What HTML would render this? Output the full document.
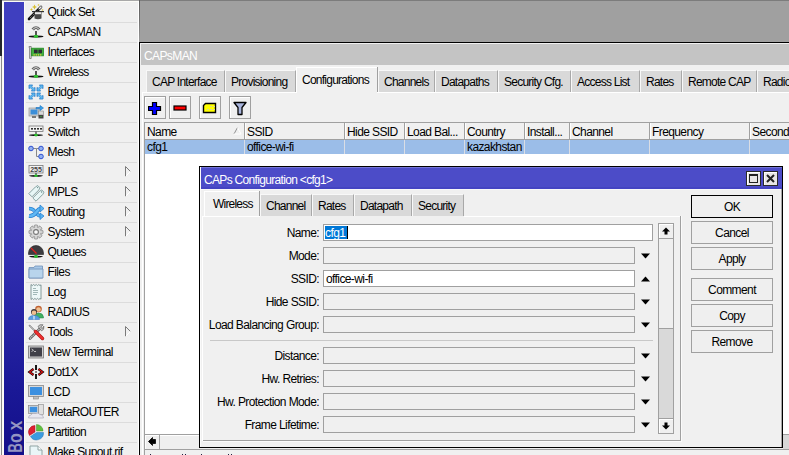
<!DOCTYPE html>
<html><head><meta charset="utf-8"><style>
html,body{margin:0;padding:0}
body{width:789px;height:455px;overflow:hidden;position:relative;background:#a0a0a0;font-family:"Liberation Sans",sans-serif;font-size:12px}
body>div,body>svg{position:absolute}
.t{white-space:nowrap;letter-spacing:-0.6px;line-height:14px;color:#000}
</style></head><body>
<div style="left:0px;top:0px;width:789px;height:1px;background:#a8a8a8"></div>
<div style="left:140px;top:0px;width:649px;height:1px;background:#7c7c7c"></div>
<div style="left:0px;top:0px;width:2px;height:56px;background:#24282c"></div>
<div style="left:0px;top:56px;width:1px;height:399px;background:#f4f4f4"></div>
<div style="left:1px;top:56px;width:1px;height:399px;background:#8a8a8a"></div>
<div style="left:2px;top:1px;width:2px;height:454px;background:#fbfbf6"></div>
<div style="left:2px;top:1px;width:137px;height:1px;background:#fbfbf6"></div>
<div style="left:4px;top:2px;width:20px;height:453px;background:linear-gradient(#3f3fbf 0px,#3f3fbf 150px,#3836b8 208px,#2826a6 304px,#1a1896 388px,#130f8a 455px)"></div>
<div style="left:24px;top:2px;width:1px;height:453px;background:#fbfbf6"></div>
<div style="left:25px;top:2px;width:113px;height:453px;background:#f0f0f0"></div>
<div style="left:138px;top:1px;width:1px;height:454px;background:#ffffff"></div>
<svg style="left:4px;top:418px" width="20" height="37"><g font-family="Liberation Sans" font-size="20.5" font-weight="bold"><g transform="translate(19.0,37) rotate(-90)" fill="#121070"><text x="2.4" y="0" textLength="9.3" lengthAdjust="spacingAndGlyphs">B</text><text x="12" y="0" textLength="9.8" lengthAdjust="spacingAndGlyphs">o</text><text x="24.7" y="0" textLength="9.6" lengthAdjust="spacingAndGlyphs">x</text></g><g transform="translate(18.0,37) rotate(-90)" fill="#9494c4"><text x="2.4" y="0" textLength="9.3" lengthAdjust="spacingAndGlyphs">B</text><text x="12" y="0" textLength="9.8" lengthAdjust="spacingAndGlyphs">o</text><text x="24.7" y="0" textLength="9.6" lengthAdjust="spacingAndGlyphs">x</text></g></g></svg>
<div class="t" style="left:47.5px;top:5px;">Quick Set</div>
<svg style="left:28px;top:4px;overflow:visible" width="16" height="16" viewBox="0 0 16 16">
<path d="M1 15 L13 3" stroke="#111" stroke-width="2.6" stroke-linecap="round"/>
<path d="M2 14 L12 4" stroke="#bbb" stroke-width="0.8" stroke-dasharray="1 1.2"/>
<path d="M11 5 L13.5 2.5" stroke="#eee" stroke-width="1.6"/>
<path d="M6.5 0.5 L7.3 2.2 L9 3 L7.3 3.8 L6.5 5.5 L5.7 3.8 L4 3 L5.7 2.2Z" fill="#d8c030"/>
<path d="M3.5 4 L4 5 L5 5.5 L4 6 L3.5 7 L3 6 L2 5.5 L3 5Z" fill="#d8c030"/>
<circle cx="10.5" cy="1" r="0.8" fill="#d8c030"/><circle cx="14.5" cy="6" r="0.8" fill="#d8c030"/>
<rect x="4" y="7" width="12" height="1.2" fill="#333"/>
<path d="M6.5 8 H13.5 V14.5 Q10 16 6.5 14.5Z" fill="#4a4a4a"/>
<rect x="7" y="8.2" width="6" height="2" fill="#e8e8e8"/>
</svg>
<div style="left:26px;top:22px;width:111px;height:1px;background:#dcdcdc"></div>
<div class="t" style="left:47.5px;top:25px;">CAPsMAN</div>
<svg style="left:28px;top:24px;overflow:visible" width="16" height="16" viewBox="0 0 16 16">
<path d="M4 5 Q8 0.5 12 5" stroke="#666" stroke-width="1.2" fill="none"/>
<path d="M5.5 6 Q8 3 10.5 6" stroke="#555" stroke-width="1.2" fill="none"/>
<rect x="7" y="7" width="2" height="5" fill="#555"/>
<ellipse cx="8" cy="12.5" rx="7.5" ry="1" fill="#111"/>
<ellipse cx="8" cy="12.3" rx="2.3" ry="1.6" fill="#2ec02e"/>
</svg>
<div style="left:26px;top:42px;width:111px;height:1px;background:#dcdcdc"></div>
<div class="t" style="left:47.5px;top:45px;">Interfaces</div>
<svg style="left:28px;top:44px;overflow:visible" width="16" height="16" viewBox="0 0 16 16">
<path d="M1 2.5 H3.2 V14.5 H1.6 V3.5 H1Z" fill="#e8e8e8" stroke="#808080" stroke-width="0.9"/>
<rect x="3.6" y="4.2" width="11.8" height="7.6" fill="#40b040" stroke="#208820" stroke-width="0.8"/>
<rect x="6" y="5.6" width="3.6" height="3.6" fill="#2c2c34"/><rect x="10.4" y="5.6" width="3.6" height="3.6" fill="#2c2c34"/>
<rect x="5.5" y="10.2" width="1.2" height="1.4" fill="#e8c840"/><rect x="7.7" y="10.2" width="1.2" height="1.4" fill="#e8c840"/><rect x="9.9" y="10.2" width="1.2" height="1.4" fill="#e8c840"/><rect x="12.1" y="10.2" width="1.2" height="1.4" fill="#e8c840"/>
</svg>
<div style="left:26px;top:62px;width:111px;height:1px;background:#dcdcdc"></div>
<div class="t" style="left:47.5px;top:65px;">Wireless</div>
<svg style="left:28px;top:64px;overflow:visible" width="16" height="16" viewBox="0 0 16 16">
<path d="M4 5 Q8 0.5 12 5" stroke="#666" stroke-width="1.2" fill="none"/>
<path d="M5.5 6 Q8 3 10.5 6" stroke="#555" stroke-width="1.2" fill="none"/>
<rect x="7" y="7" width="2" height="5" fill="#555"/>
<ellipse cx="8" cy="12.5" rx="7.5" ry="1" fill="#111"/>
<ellipse cx="8" cy="12.3" rx="2.3" ry="1.6" fill="#2ec02e"/>
</svg>
<div style="left:26px;top:82px;width:111px;height:1px;background:#dcdcdc"></div>
<div class="t" style="left:47.5px;top:85px;">Bridge</div>
<svg style="left:28px;top:84px;overflow:visible" width="16" height="16" viewBox="0 0 16 16">
<g transform="translate(1,1)"><path d="M0 0 H3.6 L2.6 1.2 L4.8 3.4 L6 2.4 V6 H2.4 L3.4 4.8 L1.2 2.6 L0 3.6Z" fill="#60bcf2" stroke="#2a7cc8" stroke-width="0.8" stroke-linejoin="round"/></g>
<g transform="translate(15,1) scale(-1,1)"><path d="M0 0 H3.6 L2.6 1.2 L4.8 3.4 L6 2.4 V6 H2.4 L3.4 4.8 L1.2 2.6 L0 3.6Z" fill="#60bcf2" stroke="#2a7cc8" stroke-width="0.8" stroke-linejoin="round"/></g>
<g transform="translate(1,15) scale(1,-1)"><path d="M0 0 H3.6 L2.6 1.2 L4.8 3.4 L6 2.4 V6 H2.4 L3.4 4.8 L1.2 2.6 L0 3.6Z" fill="#60bcf2" stroke="#2a7cc8" stroke-width="0.8" stroke-linejoin="round"/></g>
<g transform="translate(15,15) scale(-1,-1)"><path d="M0 0 H3.6 L2.6 1.2 L4.8 3.4 L6 2.4 V6 H2.4 L3.4 4.8 L1.2 2.6 L0 3.6Z" fill="#60bcf2" stroke="#2a7cc8" stroke-width="0.8" stroke-linejoin="round"/></g>
</svg>
<div style="left:26px;top:102px;width:111px;height:1px;background:#dcdcdc"></div>
<div class="t" style="left:47.5px;top:105px;">PPP</div>
<svg style="left:28px;top:104px;overflow:visible" width="16" height="16" viewBox="0 0 16 16">
<rect x="1" y="4" width="10" height="8" fill="#d0d0d0" stroke="#999" stroke-width="0.7"/>
<rect x="2.5" y="5.5" width="7" height="5" fill="#3c8ed8"/>
<rect x="4" y="12" width="4" height="2" fill="#777"/>
<rect x="10.5" y="7" width="5" height="4" fill="#d8d8d8" stroke="#888" stroke-width="0.6"/>
<rect x="10.5" y="11" width="5" height="3.5" fill="#444"/>
<rect x="12.5" y="12" width="1" height="1" fill="#3c3"/>
<path d="M8 3.5 H12 V1.5 L15.5 4 L12 6.5 V4.8 H8Z" fill="#3aa0e8" stroke="#1a70c0" stroke-width="0.6"/>
</svg>
<div style="left:26px;top:122px;width:111px;height:1px;background:#dcdcdc"></div>
<div class="t" style="left:47.5px;top:125px;">Switch</div>
<svg style="left:28px;top:124px;overflow:visible" width="16" height="16" viewBox="0 0 16 16">
<rect x="1" y="2" width="14" height="5.5" fill="#f4f4f4" stroke="#777" stroke-width="0.8"/>
<rect x="3" y="4" width="2" height="1.6" fill="#333"/><rect x="6" y="4" width="2" height="1.6" fill="#333"/>
<rect x="9" y="4" width="2" height="1.6" fill="#333"/><rect x="12" y="4" width="2" height="1.6" fill="#333"/>
<rect x="7.3" y="7.5" width="1.4" height="3" fill="#555"/>
<ellipse cx="8" cy="11.2" rx="7" ry="0.9" fill="#111"/>
<ellipse cx="8" cy="11.1" rx="1.8" ry="1.3" fill="#2ec02e"/>
</svg>
<div style="left:26px;top:142px;width:111px;height:1px;background:#dcdcdc"></div>
<div class="t" style="left:47.5px;top:145px;">Mesh</div>
<svg style="left:28px;top:144px;overflow:visible" width="16" height="16" viewBox="0 0 16 16">
<path d="M3 4.5 H8.5 V12.5 H13" stroke="#888" stroke-width="1" fill="none"/>
<path d="M8.5 4.5 H13" stroke="#888" stroke-width="1"/>
<circle cx="3" cy="4.5" r="2.3" fill="#90b0f0" stroke="#3050d0" stroke-width="1"/>
<circle cx="13" cy="4.5" r="2.3" fill="#90b0f0" stroke="#3050d0" stroke-width="1"/>
<circle cx="13" cy="12.5" r="2.3" fill="#90b0f0" stroke="#3050d0" stroke-width="1"/>
</svg>
<div style="left:26px;top:162px;width:111px;height:1px;background:#dcdcdc"></div>
<div class="t" style="left:47.5px;top:165px;">IP</div>
<svg style="left:28px;top:164px;overflow:visible" width="16" height="16" viewBox="0 0 16 16">
<rect x="1" y="1.5" width="14" height="7.5" fill="#f4f4f4" stroke="#777" stroke-width="0.8"/>
<text x="8" y="8" font-family="Liberation Sans" font-size="7" font-weight="bold" text-anchor="middle" fill="#444">255</text>
<rect x="7.3" y="9" width="1.4" height="2" fill="#555"/>
<ellipse cx="8" cy="11.8" rx="7" ry="0.9" fill="#111"/>
<ellipse cx="8" cy="11.7" rx="1.8" ry="1.3" fill="#2ec02e"/>
</svg>
<div style="left:26px;top:182px;width:111px;height:1px;background:#dcdcdc"></div>
<svg style="left:124px;top:166px" width="8" height="12"><path d="M1.5 0.5 L1.5 10.5" stroke="#7a7a7a" stroke-width="1"/><path d="M1.5 0.5 L6.5 5.5" stroke="#7a7a7a" stroke-width="1"/><path d="M1.5 10.5 L6.5 5.5" stroke="#ffffff" stroke-width="1"/></svg>
<div class="t" style="left:47.5px;top:185px;">MPLS</div>
<svg style="left:28px;top:184px;overflow:visible" width="16" height="16" viewBox="0 0 16 16">
<path d="M0.8 9.6 L7.6 2.8 L9.8 1.6 L12 3.8 L10.8 6 L4 12.8Z" fill="#e8f6f6" stroke="#7a9898" stroke-width="0.9" stroke-linejoin="round"/>
<path d="M4.8 14 L11.6 7.2 L13.8 6 L16 8.2 L14.8 10.4 L8 17.2Z" fill="#e8f6f6" stroke="#7a9898" stroke-width="0.9" stroke-linejoin="round"/>
<circle cx="9.6" cy="3.6" r="0.7" fill="#6a8888"/><circle cx="13.6" cy="8" r="0.7" fill="#6a8888"/>
</svg>
<div style="left:26px;top:202px;width:111px;height:1px;background:#dcdcdc"></div>
<svg style="left:124px;top:186px" width="8" height="12"><path d="M1.5 0.5 L1.5 10.5" stroke="#7a7a7a" stroke-width="1"/><path d="M1.5 0.5 L6.5 5.5" stroke="#7a7a7a" stroke-width="1"/><path d="M1.5 10.5 L6.5 5.5" stroke="#ffffff" stroke-width="1"/></svg>
<div class="t" style="left:47.5px;top:205px;">Routing</div>
<svg style="left:28px;top:204px;overflow:visible" width="16" height="16" viewBox="0 0 16 16">
<path d="M1 4.5 Q4.5 4.5 6.5 7" stroke="#2a80d0" stroke-width="3.6" fill="none"/>
<path d="M1 4.5 Q4.5 4.5 6.5 7" stroke="#58b4f4" stroke-width="2.2" fill="none"/>
<path d="M9 10 Q10.5 12 12.5 12" stroke="#2a80d0" stroke-width="3.6" fill="none"/>
<path d="M9 10 Q10.5 12 12.5 12" stroke="#58b4f4" stroke-width="2.2" fill="none"/>
<path d="M12 9 L16 12 L12 15.5Z" fill="#58b4f4" stroke="#2a80d0" stroke-width="0.8" stroke-linejoin="round"/>
<path d="M1 12 Q5 12.5 8 8.5 Q10.5 5 12.5 4.5" stroke="#2a80d0" stroke-width="4" fill="none"/>
<path d="M1 12 Q5 12.5 8 8.5 Q10.5 5 12.5 4.5" stroke="#60b8f4" stroke-width="2.6" fill="none"/>
<path d="M12 1 L16 4.5 L12 8Z" fill="#60b8f4" stroke="#2a80d0" stroke-width="0.8" stroke-linejoin="round"/>
</svg>
<div style="left:26px;top:222px;width:111px;height:1px;background:#dcdcdc"></div>
<svg style="left:124px;top:206px" width="8" height="12"><path d="M1.5 0.5 L1.5 10.5" stroke="#7a7a7a" stroke-width="1"/><path d="M1.5 0.5 L6.5 5.5" stroke="#7a7a7a" stroke-width="1"/><path d="M1.5 10.5 L6.5 5.5" stroke="#ffffff" stroke-width="1"/></svg>
<div class="t" style="left:47.5px;top:225px;">System</div>
<svg style="left:28px;top:224px;overflow:visible" width="16" height="16" viewBox="0 0 16 16">
<g transform="translate(8,8)">
<g fill="#d0d0d0" stroke="#888" stroke-width="0.8">
<rect x="-1.8" y="-7" width="3.6" height="14" rx="1"/>
<rect x="-1.8" y="-7" width="3.6" height="14" rx="1" transform="rotate(45)"/>
<rect x="-1.8" y="-7" width="3.6" height="14" rx="1" transform="rotate(90)"/>
<rect x="-1.8" y="-7" width="3.6" height="14" rx="1" transform="rotate(135)"/>
</g>
<circle r="4.6" fill="#d8d8d8"/>
<circle r="2.4" fill="#fafafa" stroke="#777" stroke-width="1.1"/>
</g>
</svg>
<div style="left:26px;top:242px;width:111px;height:1px;background:#dcdcdc"></div>
<svg style="left:124px;top:226px" width="8" height="12"><path d="M1.5 0.5 L1.5 10.5" stroke="#7a7a7a" stroke-width="1"/><path d="M1.5 0.5 L6.5 5.5" stroke="#7a7a7a" stroke-width="1"/><path d="M1.5 10.5 L6.5 5.5" stroke="#ffffff" stroke-width="1"/></svg>
<div class="t" style="left:47.5px;top:245px;">Queues</div>
<svg style="left:28px;top:244px;overflow:visible" width="16" height="16" viewBox="0 0 16 16">
<path d="M0.5 9 A7.5 7.5 0 0 1 15.5 9 V10.5 H0.5Z" fill="#3c3c40" stroke="#222" stroke-width="0.6"/>
<path d="M3 4 L8.5 9.5" stroke="#e02020" stroke-width="1.3"/>
<rect x="7.3" y="10.5" width="1.4" height="1.5" fill="#666"/>
<ellipse cx="8" cy="12.6" rx="7" ry="0.9" fill="#111"/>
<ellipse cx="8" cy="12.5" rx="2" ry="1.4" fill="#2ec02e"/>
</svg>
<div style="left:26px;top:262px;width:111px;height:1px;background:#dcdcdc"></div>
<div class="t" style="left:47.5px;top:265px;">Files</div>
<svg style="left:28px;top:264px;overflow:visible" width="16" height="16" viewBox="0 0 16 16">
<path d="M1 3.5 H6 L7 2 H14.5 V14 H1Z" fill="#a8c8e8" stroke="#7090b8" stroke-width="0.8"/>
<path d="M1 5 H15 V14 H1Z" fill="#b8d4ec" stroke="#7090b8" stroke-width="0.8"/>
</svg>
<div style="left:26px;top:282px;width:111px;height:1px;background:#dcdcdc"></div>
<div class="t" style="left:47.5px;top:285px;">Log</div>
<svg style="left:28px;top:284px;overflow:visible" width="16" height="16" viewBox="0 0 16 16">
<path d="M3 0.5 L4.3 1.6 L5.6 0.5 L6.9 1.6 L8.2 0.5 L9.5 1.6 L10.8 0.5 L12 1.6 L13 0.8 V15.2 L12 14.4 L10.8 15.5 L9.5 14.4 L8.2 15.5 L6.9 14.4 L5.6 15.5 L4.3 14.4 L3 15.5Z" fill="#eef8f8" stroke="#6a8484" stroke-width="0.8"/>
<path d="M5 4.5h3M5 6.5h5M5 8.5h5M5 10.5h4" stroke="#98b0b0" stroke-width="0.9"/>
</svg>
<div style="left:26px;top:302px;width:111px;height:1px;background:#dcdcdc"></div>
<div class="t" style="left:47.5px;top:305px;">RADIUS</div>
<svg style="left:28px;top:304px;overflow:visible" width="16" height="16" viewBox="0 0 16 16">
<circle cx="10.5" cy="5" r="3.3" fill="#c06030"/>
<path d="M6 14 Q6 9 10.5 9 Q15 9 15.5 13 V14Z" fill="#40b060" stroke="#208040" stroke-width="0.5"/>
<circle cx="10.5" cy="5.5" r="2.3" fill="#f0c090"/>
<circle cx="6" cy="8" r="3" fill="#403838"/>
<circle cx="6" cy="8.7" r="2.3" fill="#f0c090"/>
<path d="M0.5 15.5 Q0.5 11.5 6 11.5 Q11.5 11.5 11.5 15.5Z" fill="#5a9ee0" stroke="#3070c0" stroke-width="0.5"/>
<rect x="5.5" y="12" width="1" height="3.5" fill="#fff"/>
</svg>
<div style="left:26px;top:322px;width:111px;height:1px;background:#dcdcdc"></div>
<div class="t" style="left:47.5px;top:325px;">Tools</div>
<svg style="left:28px;top:324px;overflow:visible" width="16" height="16" viewBox="0 0 16 16">
<path d="M2 14.5 L11.5 5" stroke="#666" stroke-width="2.6" stroke-linecap="round"/>
<path d="M2 14.5 L11.5 5" stroke="#d0d0d0" stroke-width="1.2" stroke-dasharray="1.2 0.8"/>
<path d="M10 2.5 Q11.5 0 15 0.8 L12.8 3 L13.2 4 L14.5 4.3 L15.8 2.2 Q16.5 6 13.5 6.8 Z" fill="#c8c8c8" stroke="#6a6a6a" stroke-width="0.8" stroke-linejoin="round"/>
<path d="M1.5 1.5 L7 7" stroke="#777" stroke-width="1.6" stroke-linecap="round"/>
<path d="M1.5 1.5 L7 7" stroke="#ddd" stroke-width="0.6"/>
<path d="M7.5 7.5 L14.5 14.5" stroke="#b01818" stroke-width="3.4" stroke-linecap="round"/>
<path d="M7.5 7.5 L14.5 14.5" stroke="#ee3030" stroke-width="2.2" stroke-linecap="round"/>
</svg>
<div style="left:26px;top:342px;width:111px;height:1px;background:#dcdcdc"></div>
<svg style="left:124px;top:326px" width="8" height="12"><path d="M1.5 0.5 L1.5 10.5" stroke="#7a7a7a" stroke-width="1"/><path d="M1.5 0.5 L6.5 5.5" stroke="#7a7a7a" stroke-width="1"/><path d="M1.5 10.5 L6.5 5.5" stroke="#ffffff" stroke-width="1"/></svg>
<div class="t" style="left:47.5px;top:345px;">New Terminal</div>
<svg style="left:28px;top:344px;overflow:visible" width="16" height="16" viewBox="0 0 16 16">
<rect x="0.5" y="2" width="15" height="12" fill="#d0d0d0" stroke="#777" stroke-width="0.8"/>
<rect x="2" y="3.5" width="12" height="9" fill="#404048"/>
<path d="M3.5 5 L5.5 6.3 L3.5 7.5" stroke="#ddd" stroke-width="0.8" fill="none"/><path d="M6 7.5 H8" stroke="#ddd" stroke-width="0.8"/>
</svg>
<div style="left:26px;top:362px;width:111px;height:1px;background:#dcdcdc"></div>
<div class="t" style="left:47.5px;top:365px;">Dot1X</div>
<svg style="left:28px;top:364px;overflow:visible" width="16" height="16" viewBox="0 0 16 16">
<path d="M5.5 5 L1.5 8 L5.5 11" stroke="#000" stroke-width="2.4" fill="none"/>
<path d="M5.5 5 L1.5 8 L5.5 11" stroke="#e01010" stroke-width="1.2" fill="none"/>
<path d="M10.5 5 L14.5 8 L10.5 11" stroke="#000" stroke-width="2.4" fill="none"/>
<path d="M10.5 5 L14.5 8 L10.5 11" stroke="#e01010" stroke-width="1.2" fill="none"/>
<path d="M8 1 V6 M8 7.5 V8.5 M8 10 V15" stroke="#000" stroke-width="1.8"/>
</svg>
<div style="left:26px;top:382px;width:111px;height:1px;background:#dcdcdc"></div>
<div class="t" style="left:47.5px;top:385px;">LCD</div>
<svg style="left:28px;top:384px;overflow:visible" width="16" height="16" viewBox="0 0 16 16">
<rect x="0.5" y="1.5" width="15" height="11" fill="#d8d8d8" stroke="#888" stroke-width="0.8"/>
<rect x="2" y="3" width="12" height="8" fill="#3c90e0"/>
<rect x="5.5" y="12.5" width="5" height="2.5" fill="#c0c0c0" stroke="#888" stroke-width="0.6"/>
</svg>
<div style="left:26px;top:402px;width:111px;height:1px;background:#dcdcdc"></div>
<div class="t" style="left:47.5px;top:405px;">MetaROUTER</div>
<svg style="left:28px;top:404px;overflow:visible" width="16" height="16" viewBox="0 0 16 16">
<rect x="0.5" y="1.5" width="10" height="8" fill="#d8d8d8" stroke="#888" stroke-width="0.7"/>
<rect x="1.8" y="2.8" width="7.4" height="5.4" fill="#3c90e0"/>
<rect x="10.5" y="0.5" width="5" height="10" fill="#e0e0e0" stroke="#888" stroke-width="0.6"/>
<path d="M0.5 14 Q0.5 11 3 11 Q4 8.5 7.5 9.5 Q10 8 12 10.5 Q15.5 10.5 15.5 14Z" fill="#e8e8f0" stroke="#a0a0b0" stroke-width="0.6"/>
</svg>
<div style="left:26px;top:422px;width:111px;height:1px;background:#dcdcdc"></div>
<div class="t" style="left:47.5px;top:425px;">Partition</div>
<svg style="left:28px;top:424px;overflow:visible" width="16" height="16" viewBox="0 0 16 16">
<path d="M7 8 L7 1.5 A6.5 6.5 0 0 0 1.5 11.5Z" fill="#e02030" stroke="#a01020" stroke-width="0.5"/>
<path d="M8.5 7 L8.5 0.5 A6.5 6.5 0 0 1 15 7Z" fill="#60c040" stroke="#409020" stroke-width="0.5"/>
<path d="M8.5 8.5 L15.5 8.5 A7 7 0 0 1 2.5 12.5Z" fill="#3c9ce0" stroke="#2070b0" stroke-width="0.5"/>
</svg>
<div style="left:26px;top:442px;width:111px;height:1px;background:#dcdcdc"></div>
<div class="t" style="left:47.5px;top:445px;">Make Supout.rif</div>
<svg style="left:28px;top:444px;overflow:visible" width="16" height="16" viewBox="0 0 16 16">
<path d="M2 2 H10 L14 6 V16 H2Z" fill="#eaf6f8" stroke="#90a4a4" stroke-width="1"/>
<path d="M10 2 V6 H14" fill="#fff" stroke="#90a4a4" stroke-width="1"/>
<rect x="11" y="12" width="4" height="4" fill="#3c90e0"/>
</svg>
<div style="left:26px;top:462px;width:111px;height:1px;background:#dcdcdc"></div>
<div style="left:139px;top:1px;width:650px;height:41px;background:#a0a0a0"></div>
<div style="left:139px;top:0px;width:1px;height:42px;background:linear-gradient(#5c5c5c,#707070 20px,#9a9a9a 42px)"></div>
<div style="left:139px;top:42px;width:1px;height:413px;background:#000"></div>
<div style="left:139px;top:42px;width:650px;height:1px;background:#000"></div>
<div style="left:140px;top:43px;width:649px;height:412px;background:#f0f0f0"></div>
<div style="left:141px;top:44px;width:648px;height:21px;background:#c4c4c4"></div>
<div class="t" style="left:144px;top:49px;color:#ffffff">CAPsMAN</div>
<div style="left:146px;top:70px;width:79px;height:22px;background:#d9d9d9;border-left:1px solid #f8f8f8;border-top:1px solid #f8f8f8;border-right:1px solid #a8a8a8;box-sizing:border-box"></div>
<div class="t" style="left:152px;top:75px;letter-spacing:-0.75px">CAP Interface</div>
<div style="left:225px;top:70px;width:71px;height:22px;background:#d9d9d9;border-left:1px solid #f8f8f8;border-top:1px solid #f8f8f8;border-right:1px solid #a8a8a8;box-sizing:border-box"></div>
<div class="t" style="left:231px;top:75px;letter-spacing:-0.75px">Provisioning</div>
<div style="left:296px;top:67px;width:82px;height:26px;background:#f0f0f0;border-left:1px solid #fff;border-top:1px solid #fff;box-sizing:border-box"></div>
<div style="left:377px;top:67px;width:1px;height:25px;background:#a0a0a0"></div>
<div class="t" style="left:302px;top:73px;letter-spacing:-0.75px">Configurations</div>
<div style="left:378px;top:70px;width:57px;height:22px;background:#d9d9d9;border-left:1px solid #f8f8f8;border-top:1px solid #f8f8f8;border-right:1px solid #a8a8a8;box-sizing:border-box"></div>
<div class="t" style="left:384px;top:75px;letter-spacing:-0.75px">Channels</div>
<div style="left:435px;top:70px;width:63px;height:22px;background:#d9d9d9;border-left:1px solid #f8f8f8;border-top:1px solid #f8f8f8;border-right:1px solid #a8a8a8;box-sizing:border-box"></div>
<div class="t" style="left:441px;top:75px;letter-spacing:-0.75px">Datapaths</div>
<div style="left:498px;top:70px;width:73px;height:22px;background:#d9d9d9;border-left:1px solid #f8f8f8;border-top:1px solid #f8f8f8;border-right:1px solid #a8a8a8;box-sizing:border-box"></div>
<div class="t" style="left:504px;top:75px;letter-spacing:-0.75px">Security Cfg.</div>
<div style="left:571px;top:70px;width:69px;height:22px;background:#d9d9d9;border-left:1px solid #f8f8f8;border-top:1px solid #f8f8f8;border-right:1px solid #a8a8a8;box-sizing:border-box"></div>
<div class="t" style="left:577px;top:75px;letter-spacing:-0.75px">Access List</div>
<div style="left:640px;top:70px;width:42px;height:22px;background:#d9d9d9;border-left:1px solid #f8f8f8;border-top:1px solid #f8f8f8;border-right:1px solid #a8a8a8;box-sizing:border-box"></div>
<div class="t" style="left:646px;top:75px;letter-spacing:-0.75px">Rates</div>
<div style="left:682px;top:70px;width:75px;height:22px;background:#d9d9d9;border-left:1px solid #f8f8f8;border-top:1px solid #f8f8f8;border-right:1px solid #a8a8a8;box-sizing:border-box"></div>
<div class="t" style="left:688px;top:75px;letter-spacing:-0.75px">Remote CAP</div>
<div style="left:757px;top:70px;width:73px;height:22px;background:#d9d9d9;border-left:1px solid #f8f8f8;border-top:1px solid #f8f8f8;border-right:1px solid #a8a8a8;box-sizing:border-box"></div>
<div class="t" style="left:763px;top:75px;letter-spacing:-0.75px">Radio</div>
<div style="left:142px;top:92px;width:154px;height:1px;background:#fff"></div>
<div style="left:377px;top:92px;width:412px;height:1px;background:#fff"></div>
<div style="left:142px;top:92px;width:1px;height:363px;background:#fff"></div>
<div style="left:144px;top:96px;width:22px;height:23px;background:#efefef;border:1px solid #a0a0a0;box-shadow:inset 1px 1px 0 #fff;box-sizing:border-box"></div>
<div style="left:169px;top:96px;width:22px;height:23px;background:#efefef;border:1px solid #a0a0a0;box-shadow:inset 1px 1px 0 #fff;box-sizing:border-box"></div>
<div style="left:199px;top:96px;width:22px;height:23px;background:#efefef;border:1px solid #a0a0a0;box-shadow:inset 1px 1px 0 #fff;box-sizing:border-box"></div>
<div style="left:229px;top:96px;width:22px;height:23px;background:#efefef;border:1px solid #a0a0a0;box-shadow:inset 1px 1px 0 #fff;box-sizing:border-box"></div>
<svg style="left:148px;top:101px" width="14" height="14"><path d="M4.5 1.5h4v4h4v4h-4v4h-4v-4h-4v-4h4z" fill="#0000ff" stroke="#000" stroke-width="1.2"/></svg>
<svg style="left:173px;top:105px" width="14" height="6"><rect x="1" y="1" width="12" height="4" fill="#ff0000" stroke="#000" stroke-width="1.2"/></svg>
<svg style="left:202px;top:102px" width="16" height="12"><path d="M3.5 1.5h10v9h-12v-7z" fill="#ffff00" stroke="#000" stroke-width="1.4"/><path d="M8 4.5h2M11 4.5h2M5 7.5h2M8 7.5h2M11 7.5h2" stroke="#d8d890" stroke-width="1"/></svg>
<svg style="left:233px;top:101px" width="14" height="15"><path d="M1 1.5h12l-4 5v7h-4v-7z" fill="#a8b4dc" stroke="#000" stroke-width="1.3" stroke-linejoin="round"/></svg>
<div style="left:144px;top:122px;width:645px;height:1px;background:#a0a0a0"></div>
<div style="left:144px;top:122px;width:1px;height:333px;background:#a0a0a0"></div>
<div style="left:145px;top:123px;width:644px;height:311px;background:#fff"></div>
<div style="left:145px;top:123px;width:644px;height:16px;background:#f0f0f0"></div>
<div style="left:145px;top:139px;width:644px;height:1px;background:#a0a0a0"></div>
<div style="left:145px;top:140px;width:644px;height:14px;background:#9bbde8"></div>
<div class="t" style="left:147px;top:125px;">Name</div>
<div class="t" style="left:247px;top:125px;">SSID</div>
<div style="left:244px;top:123px;width:1px;height:16px;background:#a0a0a0"></div>
<div style="left:245px;top:123px;width:1px;height:16px;background:#fff"></div>
<div style="left:244px;top:140px;width:1px;height:14px;background:#dadde4"></div>
<div class="t" style="left:347px;top:125px;">Hide SSID</div>
<div style="left:344px;top:123px;width:1px;height:16px;background:#a0a0a0"></div>
<div style="left:345px;top:123px;width:1px;height:16px;background:#fff"></div>
<div style="left:344px;top:140px;width:1px;height:14px;background:#dadde4"></div>
<div class="t" style="left:407px;top:125px;">Load Bal...</div>
<div style="left:404px;top:123px;width:1px;height:16px;background:#a0a0a0"></div>
<div style="left:405px;top:123px;width:1px;height:16px;background:#fff"></div>
<div style="left:404px;top:140px;width:1px;height:14px;background:#dadde4"></div>
<div class="t" style="left:467px;top:125px;">Country</div>
<div style="left:464px;top:123px;width:1px;height:16px;background:#a0a0a0"></div>
<div style="left:465px;top:123px;width:1px;height:16px;background:#fff"></div>
<div style="left:464px;top:140px;width:1px;height:14px;background:#dadde4"></div>
<div class="t" style="left:527px;top:125px;">Install...</div>
<div style="left:524px;top:123px;width:1px;height:16px;background:#a0a0a0"></div>
<div style="left:525px;top:123px;width:1px;height:16px;background:#fff"></div>
<div style="left:524px;top:140px;width:1px;height:14px;background:#dadde4"></div>
<div class="t" style="left:572px;top:125px;">Channel</div>
<div style="left:569px;top:123px;width:1px;height:16px;background:#a0a0a0"></div>
<div style="left:570px;top:123px;width:1px;height:16px;background:#fff"></div>
<div style="left:569px;top:140px;width:1px;height:14px;background:#dadde4"></div>
<div class="t" style="left:652px;top:125px;">Frequency</div>
<div style="left:649px;top:123px;width:1px;height:16px;background:#a0a0a0"></div>
<div style="left:650px;top:123px;width:1px;height:16px;background:#fff"></div>
<div style="left:649px;top:140px;width:1px;height:14px;background:#dadde4"></div>
<div class="t" style="left:752px;top:125px;">Secondary</div>
<div style="left:749px;top:123px;width:1px;height:16px;background:#a0a0a0"></div>
<div style="left:750px;top:123px;width:1px;height:16px;background:#fff"></div>
<div style="left:749px;top:140px;width:1px;height:14px;background:#dadde4"></div>
<svg style="left:233px;top:127px" width="9" height="8"><path d="M1 7L4.5 0.5" stroke="#909090" stroke-width="1"/><path d="M4.5 0.5L8 7H1" stroke="#fff" stroke-width="1" fill="none"/></svg>
<div class="t" style="left:147px;top:140px;">cfg1</div>
<div class="t" style="left:247px;top:140px;">office-wi-fi</div>
<div class="t" style="left:467px;top:140px;">kazakhstan</div>
<div style="left:145px;top:434px;width:644px;height:1px;background:#a0a0a0"></div>
<div style="left:145px;top:435px;width:644px;height:14px;background:#efefef;border-top:1px solid #fff;box-sizing:border-box"></div>
<div style="left:145px;top:435px;width:14px;height:14px;background:#efefef;border-top:1px solid #fff;border-left:1px solid #fff;box-sizing:border-box"></div>
<div style="left:159px;top:435px;width:1px;height:14px;background:#a0a0a0"></div>
<div style="left:783px;top:435px;width:6px;height:14px;background:#d8d8d8"></div>
<svg style="left:148px;top:437px" width="9" height="10"><path d="M0.5 4.5L4.5 0.5V2.5H7.5V6.5H4.5V8.5Z" fill="#000" stroke="#000" stroke-width="0.8"/></svg>
<div style="left:145px;top:449px;width:644px;height:1px;background:#a0a0a0"></div>
<div style="left:199px;top:166px;width:584px;height:282px;background:#f0f0f0;border:1px solid #000;box-sizing:border-box"></div>
<div style="left:200px;top:167px;width:582px;height:1px;background:#7474d8"></div>
<div style="left:200px;top:167px;width:1px;height:280px;background:#fafafa"></div>
<div style="left:201px;top:168px;width:581px;height:21px;background:#4c4cc8"></div>
<div style="left:201px;top:187px;width:581px;height:2px;background:#4444c2"></div>
<div style="left:201px;top:189px;width:581px;height:1px;background:#f8f8f8"></div>
<div class="t" style="left:204px;top:173px;color:#fff;letter-spacing:-0.68px">CAPs Configuration &lt;cfg1&gt;</div>
<div style="left:746px;top:171px;width:15px;height:15px;background:#e8e6e6;border:1px solid #2a2a2a;box-shadow:inset 1px 1px 0 #fff;box-sizing:border-box"></div>
<div style="left:763px;top:171px;width:15px;height:15px;background:#e8e6e6;border:1px solid #2a2a2a;box-shadow:inset 1px 1px 0 #fff;box-sizing:border-box"></div>
<div style="left:749px;top:174px;width:9px;height:9px;border:1px solid #222;border-top:2px solid #222;box-sizing:border-box"></div>
<svg style="left:766px;top:174px" width="9" height="9"><path d="M1 1L8 8M8 1L1 8" stroke="#222" stroke-width="2"/></svg>
<div style="left:204px;top:191px;width:56px;height:26px;background:#f0f0f0;border-left:1px solid #fff;border-top:1px solid #fff;box-sizing:border-box"></div>
<div style="left:259px;top:191px;width:1px;height:25px;background:#a0a0a0"></div>
<div class="t" style="left:213px;top:197px;letter-spacing:-0.8px">Wireless</div>
<div style="left:260px;top:194px;width:52px;height:22px;background:#d9d9d9;border-left:1px solid #f8f8f8;border-top:1px solid #f8f8f8;border-right:1px solid #a8a8a8;box-sizing:border-box"></div>
<div class="t" style="left:266px;top:199px;letter-spacing:-0.75px">Channel</div>
<div style="left:312px;top:194px;width:42px;height:22px;background:#d9d9d9;border-left:1px solid #f8f8f8;border-top:1px solid #f8f8f8;border-right:1px solid #a8a8a8;box-sizing:border-box"></div>
<div class="t" style="left:318px;top:199px;letter-spacing:-0.75px">Rates</div>
<div style="left:354px;top:194px;width:58px;height:22px;background:#d9d9d9;border-left:1px solid #f8f8f8;border-top:1px solid #f8f8f8;border-right:1px solid #a8a8a8;box-sizing:border-box"></div>
<div class="t" style="left:360px;top:199px;letter-spacing:-0.75px">Datapath</div>
<div style="left:412px;top:194px;width:52px;height:22px;background:#d9d9d9;border-left:1px solid #f8f8f8;border-top:1px solid #f8f8f8;border-right:1px solid #a8a8a8;box-sizing:border-box"></div>
<div class="t" style="left:418px;top:199px;letter-spacing:-0.75px">Security</div>
<div style="left:202px;top:216px;width:1px;height:225px;background:#fff"></div>
<div style="left:202px;top:216px;width:58px;height:1px;background:#fff"></div>
<div style="left:781px;top:189px;width:1px;height:258px;background:#a8a8a8"></div>
<div style="left:203px;top:441px;width:479px;height:1px;background:#fafafa"></div>
<div style="left:681px;top:216px;width:1px;height:226px;background:#fafafa"></div>
<div style="left:464px;top:216px;width:217px;height:1px;background:#fff"></div>
<div style="left:680px;top:216px;width:1px;height:225px;background:#a0a0a0"></div>
<div style="left:203px;top:440px;width:478px;height:1px;background:#a0a0a0"></div>
<div class="t" style="left:200px;top:226px;width:119px;text-align:right">Name:</div>
<div style="left:323px;top:224px;width:330px;height:17px;background:#fff;border:1px solid #a0a0a0;box-sizing:border-box"></div>
<div class="t" style="left:200px;top:249px;width:119px;text-align:right">Mode:</div>
<div style="left:323px;top:247px;width:312px;height:17px;background:#f0f0f0;border:1px solid #a0a0a0;box-sizing:border-box"></div>
<svg style="left:641px;top:253px" width="10" height="6"><path d="M0 0.5L4.5 5.5L9 0.5Z" fill="#000"/></svg>
<div class="t" style="left:200px;top:272px;width:119px;text-align:right">SSID:</div>
<div style="left:323px;top:270px;width:312px;height:17px;background:#fff;border:1px solid #a0a0a0;box-sizing:border-box"></div>
<svg style="left:641px;top:276px" width="10" height="6"><path d="M0 5.5L4.5 0.5L9 5.5Z" fill="#000"/></svg>
<div class="t" style="left:200px;top:295px;width:119px;text-align:right">Hide SSID:</div>
<div style="left:323px;top:293px;width:312px;height:17px;background:#f0f0f0;border:1px solid #a0a0a0;box-sizing:border-box"></div>
<svg style="left:641px;top:299px" width="10" height="6"><path d="M0 0.5L4.5 5.5L9 0.5Z" fill="#000"/></svg>
<div class="t" style="left:200px;top:318px;width:119px;text-align:right">Load Balancing Group:</div>
<div style="left:323px;top:316px;width:312px;height:17px;background:#f0f0f0;border:1px solid #a0a0a0;box-sizing:border-box"></div>
<svg style="left:641px;top:322px" width="10" height="6"><path d="M0 0.5L4.5 5.5L9 0.5Z" fill="#000"/></svg>
<div class="t" style="left:200px;top:349px;width:119px;text-align:right">Distance:</div>
<div style="left:323px;top:347px;width:312px;height:17px;background:#f0f0f0;border:1px solid #a0a0a0;box-sizing:border-box"></div>
<svg style="left:641px;top:353px" width="10" height="6"><path d="M0 0.5L4.5 5.5L9 0.5Z" fill="#000"/></svg>
<div class="t" style="left:200px;top:372px;width:119px;text-align:right">Hw. Retries:</div>
<div style="left:323px;top:370px;width:312px;height:17px;background:#f0f0f0;border:1px solid #a0a0a0;box-sizing:border-box"></div>
<svg style="left:641px;top:376px" width="10" height="6"><path d="M0 0.5L4.5 5.5L9 0.5Z" fill="#000"/></svg>
<div class="t" style="left:200px;top:395px;width:119px;text-align:right">Hw. Protection Mode:</div>
<div style="left:323px;top:393px;width:312px;height:17px;background:#f0f0f0;border:1px solid #a0a0a0;box-sizing:border-box"></div>
<svg style="left:641px;top:399px" width="10" height="6"><path d="M0 0.5L4.5 5.5L9 0.5Z" fill="#000"/></svg>
<div class="t" style="left:200px;top:418px;width:119px;text-align:right">Frame Lifetime:</div>
<div style="left:323px;top:416px;width:312px;height:17px;background:#f0f0f0;border:1px solid #a0a0a0;box-sizing:border-box"></div>
<svg style="left:641px;top:422px" width="10" height="6"><path d="M0 0.5L4.5 5.5L9 0.5Z" fill="#000"/></svg>
<div style="left:325px;top:226px;width:23px;height:13px;background:#0078d7"></div>
<div class="t" style="left:325px;top:226px;color:#fff">cfg1</div>
<div style="left:347px;top:226px;width:1px;height:13px;background:#000"></div>
<div class="t" style="left:326px;top:272px;">office-wi-fi</div>
<div style="left:210px;top:340px;width:443px;height:1px;background:#c8c8c8"></div>
<div style="left:658px;top:223px;width:16px;height:211px;background:#d9d9d9;border:1px solid #a0a0a0;box-sizing:border-box"></div>
<div style="left:659px;top:224px;width:14px;height:15px;background:#efefef;border-bottom:1px solid #a0a0a0;box-shadow:inset 1px 1px 0 #fff;box-sizing:border-box"></div>
<div style="left:659px;top:239px;width:14px;height:90px;background:#efefef;border-bottom:1px solid #a0a0a0;box-sizing:border-box"></div>
<div style="left:659px;top:418px;width:14px;height:15px;background:#efefef;border-top:1px solid #a0a0a0;box-shadow:inset 1px 1px 0 #fff;box-sizing:border-box"></div>
<svg style="left:661px;top:227px" width="10" height="8"><path d="M5 0.5L9 4.5H6.5V7.5H3.5V4.5H1Z" fill="#000"/></svg>
<svg style="left:661px;top:422px" width="10" height="8"><path d="M5 7.5L9 3.5H6.5V0.5H3.5V3.5H1Z" fill="#000"/></svg>
<div class="t" style="left:691px;top:195px;width:82px;height:23px;box-sizing:border-box;border:1px solid #000;background:#efefef;text-align:center;line-height:22px">OK</div>
<div class="t" style="left:691px;top:221px;width:82px;height:23px;box-sizing:border-box;border:1px solid #a0a0a0;background:#efefef;text-align:center;line-height:22px">Cancel</div>
<div class="t" style="left:691px;top:247px;width:82px;height:23px;box-sizing:border-box;border:1px solid #a0a0a0;background:#efefef;text-align:center;line-height:22px">Apply</div>
<div class="t" style="left:691px;top:278px;width:82px;height:23px;box-sizing:border-box;border:1px solid #a0a0a0;background:#efefef;text-align:center;line-height:22px">Comment</div>
<div class="t" style="left:691px;top:304px;width:82px;height:23px;box-sizing:border-box;border:1px solid #a0a0a0;background:#efefef;text-align:center;line-height:22px">Copy</div>
<div class="t" style="left:691px;top:330px;width:82px;height:23px;box-sizing:border-box;border:1px solid #a0a0a0;background:#efefef;text-align:center;line-height:22px">Remove</div>
<div style="left:150px;top:454px;width:1px;height:1px;background:#202040"></div>
<div style="left:182px;top:454px;width:1px;height:1px;background:#202040"></div>
<div style="left:185px;top:454px;width:1px;height:1px;background:#202040"></div>
<div style="left:201px;top:454px;width:1px;height:1px;background:#202040"></div>
<div style="left:228px;top:454px;width:1px;height:1px;background:#202040"></div>
<div style="left:231px;top:454px;width:1px;height:1px;background:#202040"></div>
</body></html>
